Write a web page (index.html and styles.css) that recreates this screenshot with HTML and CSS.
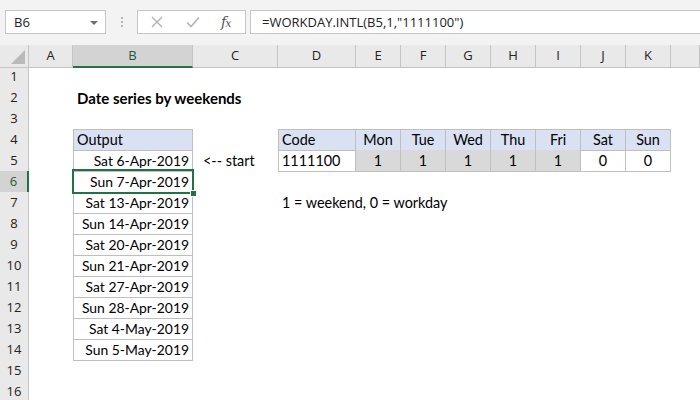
FILE: index.html
```html
<!DOCTYPE html>
<html>
<head>
<meta charset="utf-8">
<link rel="stylesheet" href="styles.css">
</head>
<body>
<div class="app">
  <div class="toolbar">
    <div class="namebox"><span>B6</span><span class="caret"></span></div>
    <div class="grip"><i></i><i></i><i></i></div>
    <div class="fbuttons">
      <svg class="ico" width="14" height="14" viewBox="0 0 14 14"><path d="M2 2 L12 12 M12 2 L2 12" stroke="#b3b3b3" stroke-width="1.4" fill="none"/></svg>
      <svg class="ico" width="16" height="14" viewBox="0 0 16 14"><path d="M2 7.5 L6 11.5 L14 2.5" stroke="#b3b3b3" stroke-width="1.6" fill="none"/></svg>
      <span class="fx">f<span class="fxx">x</span></span>
    </div>
    <div class="formula">=WORKDAY.INTL(B5,1,"1111100")</div>
  </div>
  <div class="sheet">
    <div class="row colhdr">
      <div class="corner"><span class="tri"></span></div>
      <div class="ch">A</div><div class="ch sel">B</div><div class="ch">C</div><div class="ch">D</div>
      <div class="ch">E</div><div class="ch">F</div><div class="ch">G</div><div class="ch">H</div>
      <div class="ch">I</div><div class="ch">J</div><div class="ch">K</div><div class="ch last"></div>
    </div>
    <div class="row"><div class="rh">1</div><div></div><div></div><div></div><div></div><div></div><div></div><div></div><div></div><div></div><div></div><div></div><div></div></div>
    <div class="row"><div class="rh">2</div><div></div><div class="c title">Date series by weekends</div><div></div><div></div><div></div><div></div><div></div><div></div><div></div><div></div><div></div><div></div></div>
    <div class="row"><div class="rh">3</div><div></div><div></div><div></div><div></div><div></div><div></div><div></div><div></div><div></div><div></div><div></div><div></div></div>
    <div class="row">
      <div class="rh">4</div><div></div>
      <div class="c t tl tt hd">Output</div>
      <div></div>
      <div class="c t tl tt hd">Code</div>
      <div class="c t tt hd ctr">Mon</div><div class="c t tt hd ctr">Tue</div><div class="c t tt hd ctr">Wed</div><div class="c t tt hd ctr">Thu</div><div class="c t tt hd ctr">Fri</div><div class="c t tt hd ctr">Sat</div><div class="c t tt hd ctr">Sun</div>
      <div></div>
    </div>
    <div class="row">
      <div class="rh">5</div><div></div>
      <div class="c t tl r">Sat 6-Apr-2019</div>
      <div class="c arrow">&lt;-- start</div>
      <div class="c t tl">1111100</div>
      <div class="c t ctr on">1</div><div class="c t ctr on">1</div><div class="c t ctr on">1</div><div class="c t ctr on">1</div><div class="c t ctr on">1</div><div class="c t ctr">0</div><div class="c t ctr">0</div>
      <div></div>
    </div>
    <div class="row">
      <div class="rh sel">6</div><div></div>
      <div class="c t tl r active">Sun 7-Apr-2019</div>
      <div></div><div></div><div></div><div></div><div></div><div></div><div></div><div></div><div></div><div></div>
    </div>
    <div class="row">
      <div class="rh">7</div><div></div>
      <div class="c t tl r">Sat 13-Apr-2019</div>
      <div></div>
      <div class="c note">1 = weekend, 0 = workday</div>
      <div></div><div></div><div></div><div></div><div></div><div></div><div></div><div></div>
    </div>
    <div class="row"><div class="rh">8</div><div></div><div class="c t tl r">Sun 14-Apr-2019</div><div></div><div></div><div></div><div></div><div></div><div></div><div></div><div></div><div></div><div></div></div>
    <div class="row"><div class="rh">9</div><div></div><div class="c t tl r">Sat 20-Apr-2019</div><div></div><div></div><div></div><div></div><div></div><div></div><div></div><div></div><div></div><div></div></div>
    <div class="row"><div class="rh">10</div><div></div><div class="c t tl r">Sun 21-Apr-2019</div><div></div><div></div><div></div><div></div><div></div><div></div><div></div><div></div><div></div><div></div></div>
    <div class="row"><div class="rh">11</div><div></div><div class="c t tl r">Sat 27-Apr-2019</div><div></div><div></div><div></div><div></div><div></div><div></div><div></div><div></div><div></div><div></div></div>
    <div class="row"><div class="rh">12</div><div></div><div class="c t tl r">Sun 28-Apr-2019</div><div></div><div></div><div></div><div></div><div></div><div></div><div></div><div></div><div></div><div></div></div>
    <div class="row"><div class="rh">13</div><div></div><div class="c t tl r">Sat 4-May-2019</div><div></div><div></div><div></div><div></div><div></div><div></div><div></div><div></div><div></div><div></div></div>
    <div class="row"><div class="rh">14</div><div></div><div class="c t tl r">Sun 5-May-2019</div><div></div><div></div><div></div><div></div><div></div><div></div><div></div><div></div><div></div><div></div></div>
    <div class="row"><div class="rh">15</div><div></div><div></div><div></div><div></div><div></div><div></div><div></div><div></div><div></div><div></div><div></div><div></div></div>
    <div class="row"><div class="rh">16</div><div></div><div></div><div></div><div></div><div></div><div></div><div></div><div></div><div></div><div></div><div></div><div></div></div>
  </div>
</div>
</body>
</html>
```

FILE: styles.css
```css
html, body {
  margin: 0;
  padding: 0;
}
body {
  width: 700px;
  height: 400px;
  overflow: hidden;
  background: #ffffff;
}
.app {
  width: 700px;
  height: 400px;
  overflow: hidden;
}
.toolbar {
  height: 45px;
  box-sizing: border-box;
  background: #f3f3f3;
  display: flex;
  align-items: flex-start;
  padding: 10px 0 0 5px;
  font-family: "Open Sans", "Noto Sans", sans-serif;
}
.namebox {
  width: 101px;
  height: 24px;
  box-sizing: border-box;
  background: #fff;
  border: 1px solid #c6c6c6;
  display: flex;
  align-items: center;
  justify-content: space-between;
  padding: 0 7px 0 8px;
  font-size: 13px;
  color: #222;
}
.caret {
  width: 0;
  height: 0;
  border-left: 4px solid transparent;
  border-right: 4px solid transparent;
  border-top: 4px solid #6e6e6e;
  margin-top: 1px;
}
.grip {
  width: 31px;
  height: 24px;
  display: flex;
  flex-direction: column;
  align-items: center;
  justify-content: center;
  gap: 2px;
}
.grip i {
  display: block;
  width: 2px;
  height: 2px;
  background: #b5b5b5;
}
.fbuttons {
  width: 109px;
  height: 24px;
  box-sizing: border-box;
  background: #fff;
  border: 1px solid #c6c6c6;
  display: flex;
  align-items: center;
  padding: 0 0 0 12px;
  gap: 21px;
}
.fx {
  font-family: "DejaVu Serif", "Liberation Serif", serif;
  font-style: italic;
  font-size: 14px;
  color: #555;
  letter-spacing: -1px;
  margin-left: -1px;
}
.fxx {
  font-size: 11px;
}
.formula {
  flex: 1;
  height: 24px;
  margin-left: 4px;
  box-sizing: border-box;
  background: #fff;
  border: 1px solid #c6c6c6;
  border-right: none;
  padding-left: 11px;
  font-size: 13px;
  line-height: 22px;
  color: #222;
  white-space: nowrap;
}
.sheet {
  font-family: Lato, "Liberation Sans", sans-serif;
  font-size: 14.4px;
  color: #000;
}
.row {
  display: grid;
  grid-template-columns: 29px 44px 120px 85px 78px repeat(7, 45px) 1fr;
  height: 21px;
}
.row > div {
  min-width: 0;
  box-sizing: border-box;
}
.colhdr > div {
  background: #e9e9e9;
  border-right: 1px solid #c4c4c4;
  border-bottom: 1px solid #c4c4c4;
  font-family: "Open Sans", "Noto Sans", sans-serif;
  font-size: 13px;
  color: #222;
  text-align: center;
  line-height: 21px;
}
.colhdr .sel {
  background: #d3d3d3;
  border-bottom: 2px solid #217346;
  color: #1e5a36;
}
.colhdr .corner {
  position: relative;
  border-right: 1px solid #c4c4c4;
}
.tri {
  position: absolute;
  right: 3px;
  bottom: 3px;
  width: 0;
  height: 0;
  border-left: 14px solid transparent;
  border-bottom: 14px solid #b9b9b9;
}
.rh {
  background: #e9e9e9;
  border-right: 1px solid #c4c4c4;
  border-bottom: 1px solid #d4d4d4;
  font-family: "Open Sans", "Noto Sans", sans-serif;
  font-size: 13px;
  color: #222;
  text-align: center;
  line-height: 21px;
}
.rh.sel {
  background: #d3d3d3;
  border-right: 2px solid #217346;
  color: #1e5a36;
}
.c {
  line-height: 22px;
  padding: 0 3px 0 4px;
  white-space: nowrap;
}
.title {
  font-weight: bold;
  font-size: 15px;
  overflow: visible;
}
.t {
  border-right: 1px solid #bfbfbf;
  border-bottom: 1px solid #bfbfbf;
  line-height: 21px;
}
.r {
  font-size: 13.9px;
  text-align: right;
}
.tl {
  border-left: 1px solid #bfbfbf;
  padding-left: 3px;
}
.tt {
  border-top: 1px solid #bfbfbf;
  line-height: 20px;
}
.hd {
  background: #d9e1f2;
}
.on {
  background: #d9d9d9;
}
.ctr {
  text-align: center;
  padding: 0;
}
.arrow {
  padding-left: 10px;
}
.note {
  overflow: visible;
  padding-left: 4px;
}
.active {
  position: relative;
}
.active::before {
  content: "";
  position: absolute;
  left: -2px;
  top: -2px;
  right: -2px;
  bottom: -2px;
  border: 2px solid #217346;
}
.active::after {
  content: "";
  position: absolute;
  right: -5px;
  bottom: -5px;
  width: 5px;
  height: 5px;
  background: #217346;
  border: 1px solid #fff;
}
```
